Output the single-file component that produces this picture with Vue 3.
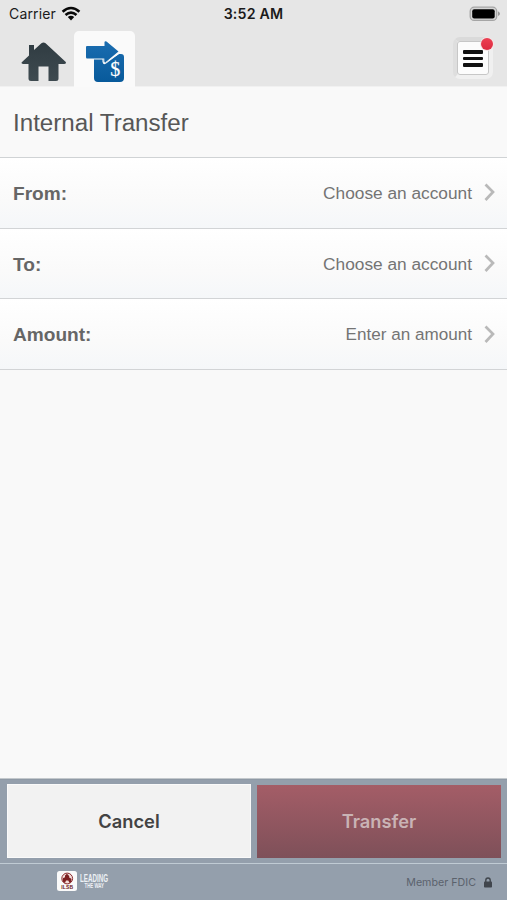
<script setup>
const rows = [
  { label: 'From:', value: 'Choose an account', size: 'regular' },
  { label: 'To:', value: 'Choose an account', size: 'regular' },
  { label: 'Amount:', value: 'Enter an amount', size: 'compact' }
]
</script>

<template>
  <div class="screen">
    <header class="top">
      <div class="status">
        <div class="carrier">
          <span>Carrier</span>
          <svg class="wifi" width="20" height="15" viewBox="0 0 20 15">
            <g fill="none" stroke="#080808" stroke-width="2.6">
              <path d="M1.6 5.8Q10 -1.8 18.4 5.8" />
              <path d="M4.5 9Q10 4.1 15.5 9" />
            </g>
            <path d="M6.8 11.1Q10 8.5 13.2 11.1L10 14.4Z" fill="#080808" />
          </svg>
        </div>
        <span class="clock">3:52 AM</span>
        <svg class="battery" width="32" height="16" viewBox="0 0 32 16">
          <rect x="1.2" y="1.2" width="26.5" height="13.2" rx="4" fill="#d5d5d5" stroke="#a5a5a5" stroke-width="1.3" />
          <rect x="3.2" y="3.2" width="22.5" height="9.2" rx="2" fill="#000" />
          <path d="M29 5.2Q31 6.2 31 7.7T29 10Z" fill="#999" />
        </svg>
      </div>
      <nav class="nav">
        <div class="home">
          <svg width="46" height="42" viewBox="0 0 46 42">
            <defs>
              <linearGradient id="homeFill" x2="0" y2="1">
                <stop stop-color="#303c42" /><stop offset="1" stop-color="#3e4a50" />
              </linearGradient>
            </defs>
            <path d="M8 4H13V9L20.4 2.2Q22.5.6 24.6 2.2L44.8 21Q45.5 23 43 23H37.5V37.5Q37.5 40 35 40H27.5V25.5H17.5V40H10Q7.5 40 7.5 37.5V23H2Q-.4 22.8 1 21L8 14.5Z" fill="url(#homeFill)" />
          </svg>
        </div>
        <div class="tab">
          <svg width="40" height="44" viewBox="0 0 40 44">
            <defs>
              <linearGradient id="blueFill" gradientUnits="userSpaceOnUse" x1="0" y1="1" x2="0" y2="42">
                <stop stop-color="#1b6db0" /><stop offset="1" stop-color="#085a9b" />
              </linearGradient>
            </defs>
            <path d="M8 17H17.5V24L33 14H35Q38 14 38 17V38Q38 42 34 42H12Q8 42 8 38Z" fill="url(#blueFill)" />
            <path d="M1 6H18.5V2Q19 .8 20.5 1.6L32.5 11.5L19.5 22.3Q18.3 22.8 18.3 21V18.5H1Q0 18.5 0 17V7Q0 6 1 6Z" fill="url(#blueFill)" />
            <path d="M8 19H17V21.6Q17.6 25 20.5 22.6L33.5 12.8" fill="none" stroke="#fafafa" stroke-width="1.1" />
            <text x="24.3" y="35.8" class="dollar">$</text>
          </svg>
        </div>
        <div class="menu">
          <i></i><i></i><i></i>
          <b class="dot"></b>
        </div>
      </nav>
    </header>

    <main class="content">
      <h1>Internal Transfer</h1>
      <div v-for="row in rows" :key="row.label" class="row">
        <strong>{{ row.label }}</strong>
        <span class="value" :class="row.size">{{ row.value }}</span>
        <svg class="chevron" width="11" height="19" viewBox="0 0 11 19">
          <path d="M1.5 1.5L9 9L1.5 17" fill="none" stroke="#b9b9b9" stroke-width="2.7" />
        </svg>
      </div>
    </main>

    <footer>
      <div class="actions">
        <button class="cancel">Cancel</button>
        <button class="transfer">Transfer</button>
      </div>
      <div class="legal">
        <div class="brand">
          <svg width="20" height="20" viewBox="0 0 20 20">
            <rect width="20" height="20" rx="2.5" fill="#fafafa" />
            <circle cx="10.2" cy="7.5" r="5.4" fill="#f4dfdc" stroke="#8c292b" stroke-width="1" />
            <path d="M5.8 10.5V7.2L8 6.2V4.6L10 2.8L12.2 5V6.4L14.4 7.8V10.5L12.5 12L11.3 9.4H9L8 12Z" fill="#7d2022" />
            <text x="4.2" y="18.2" textLength="12" class="initials">ILSB</text>
          </svg>
          <svg width="50" height="24" viewBox="0 -3 50 24" class="slogan">
            <text x="0" y="10.5" textLength="28" lengthAdjust="spacingAndGlyphs" font-size="10.5">LEADING</text>
            <text x="4.5" y="16.9" textLength="19.5" lengthAdjust="spacingAndGlyphs" font-size="6.8">THE WAY</text>
          </svg>
        </div>
        <div class="member">
          <span>Member FDIC</span>
          <svg width="8" height="11" viewBox="0 0 8 11">
            <path d="M1.8 5V3.2Q1.8 1 4 1T6.2 3.2V5" fill="none" stroke="#41464d" stroke-width="1.4" />
            <rect y="4.6" width="8" height="6" rx=".8" fill="#41464d" />
          </svg>
        </div>
      </div>
    </footer>
  </div>
</template>

<style>
body { margin: 0; }
</style>

<style scoped>
* { box-sizing: border-box; }
.screen {
  width: 507px;
  height: 900px;
  display: flex;
  flex-direction: column;
  overflow: hidden;
  background: #f9f9f9;
  font-family: "Liberation Sans", Arial, sans-serif;
}
svg { display: block; flex: none; }
.top { height: 87px; background: #e6e6e6; border-bottom: 1px solid #f1f1f1; }
.status {
  height: 28px;
  display: grid;
  grid-template-columns: 1fr auto 1fr;
  align-items: center;
  padding: 0 6px 0 9px;
  font: 400 14px/28px Inter, sans-serif;
  color: #1b1b1b;
}
.carrier { display: flex; align-items: center; gap: 5px; letter-spacing: .15px; }
.wifi { margin-top: -1px; }
.clock { font-weight: 600; font-size: 14.2px; letter-spacing: .2px; margin: 0 3px 0 0; }
.battery { justify-self: end; margin-top: -1px; }
.nav { height: 58px; display: flex; align-items: flex-start; padding: 3px 13px 0 21px; }
.home { padding-top: 10px; width: 53px; }
.tab { width: 61px; height: 56px; padding: 9px 0 0 12px; background: #fafafa; border-radius: 5px 5px 0 0; }
.dollar { font: 20px "Liberation Serif", serif; fill: #fff; stroke: #fff; stroke-width: .2px; }
.menu {
  position: relative;
  width: 40px;
  height: 42px;
  margin: 6px 1px 0 auto;
  padding-top: 1px;
  display: flex;
  flex-direction: column;
  justify-content: center;
  align-items: center;
  gap: 3px;
  border: 4px solid #f0f0f0;
  border-top-color: #dadada;
  border-left-color: #dedede;
  border-radius: 7px;
  background: #fcfcfc;
  box-shadow: inset 0 0 0 1px #c7c7c7;
}
.menu i { width: 20px; height: 3.5px; border-radius: 1px; background: #101010; }
.dot { position: absolute; right: -4px; top: -3px; width: 12px; height: 12px; border-radius: 50%; background: linear-gradient(#ed4052, #dc2b40); box-shadow: 0 0 0 1px #f5e5e6; }
.content { flex: 1; }
h1 { height: 71px; margin: 0; padding-left: 13px; border-bottom: 1px solid #d0d3d5; font-size: 24.15px; line-height: 71px; font-weight: 400; color: #575757; }
.row {
  height: 70.7px;
  display: flex;
  align-items: center;
  padding: 2px 12px 0 13px;
  border-bottom: 1.5px solid #d2d4d6;
  background: linear-gradient(#fff, #fafafa 60%, #f5f7f9);
}
.row strong { color: #666; font-size: 19.1px; }
.value { margin-left: auto; color: #747474; font-size: 17.3px; }
.value.compact { font-size: 17.1px; }
.chevron { margin: -2px 0 0 12px; }
footer { height: 122px; background: #949fac; border-top: 1px solid #c3c8cc; }
.actions { height: 85px; display: grid; grid-template-columns: 244px 244px; gap: 6px; padding: 4px 6px 6px 7px; border-top: 1px solid #8f99a5; border-bottom: 1px solid #c0cbd4; }
button { border: 0; padding: 0; font: 600 18.3px/1 Inter, sans-serif; }
.cancel { height: 74px; background: #f2f2f2; color: #434343; border: 1px solid #fafafa; }
.transfer { height: 73px; margin-top: 1px; background: linear-gradient(#a45d67, #7e5059); color: #c9b3b5; }
.legal { height: 36px; display: flex; justify-content: space-between; padding: 7px 15px 0 57px; }
.brand { display: flex; gap: 3px; }
.initials { font: bold 5px "Liberation Sans", sans-serif; fill: #702022; }
.slogan { margin-top: -3px; font-family: "Liberation Sans", sans-serif; font-weight: 700; fill: #edf1f5; }
.member { height: 22px; display: flex; align-items: center; gap: 8px; font: 400 10.7px Inter, sans-serif; color: #5b626c; }
</style>
